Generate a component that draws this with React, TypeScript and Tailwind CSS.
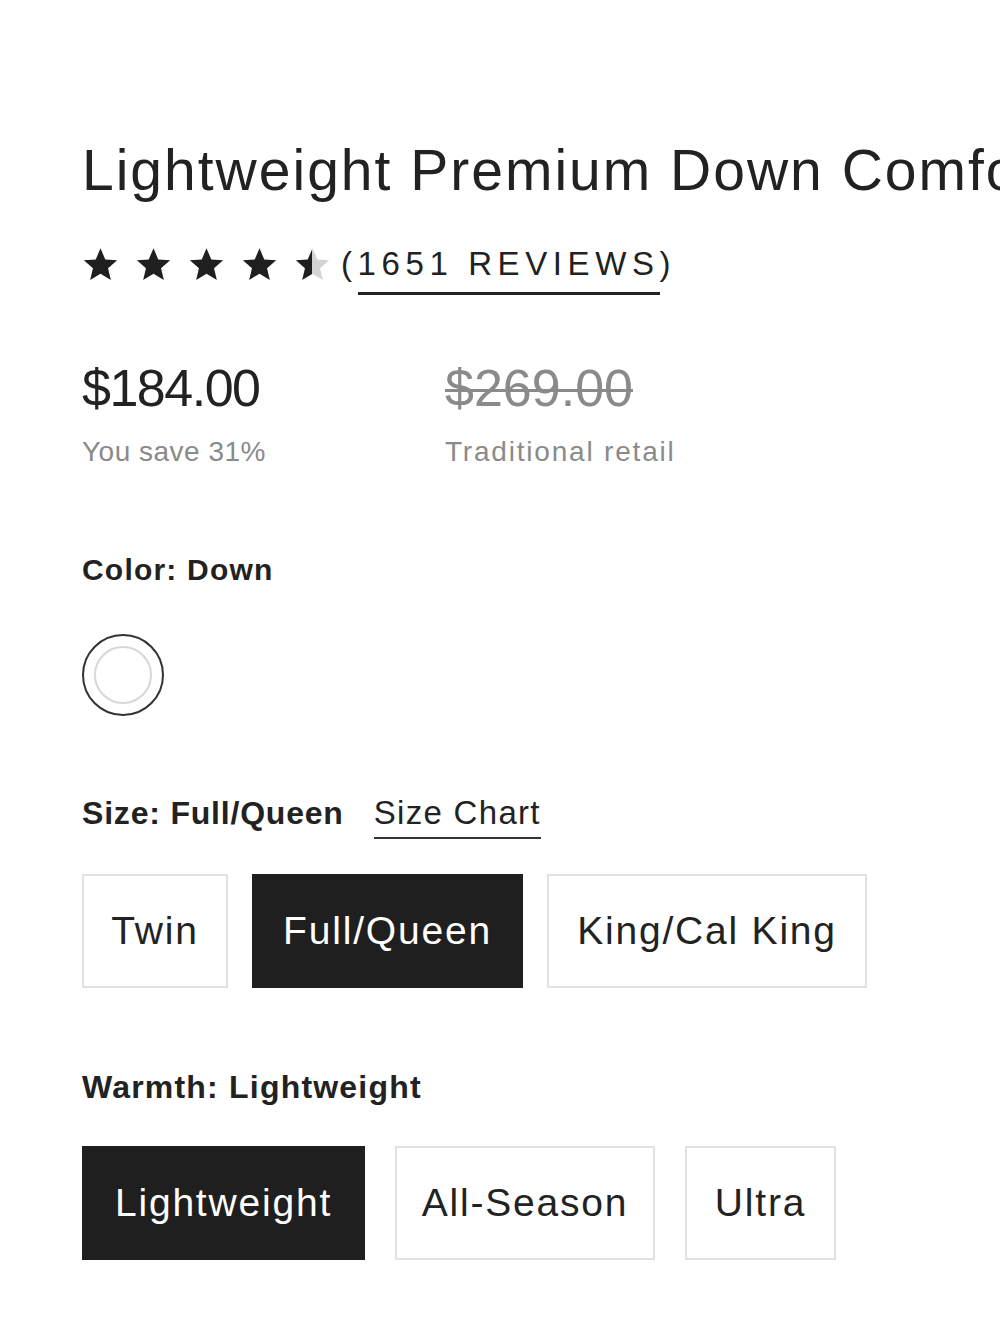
import React from "react";

function Star({ half = false }: { half?: boolean }) {
  return (
    <svg width="37" height="37" viewBox="0 0 24 24">
      <defs>
        <linearGradient id="halfStar">
          <stop offset="50%" stopColor="#1f1f1f" />
          <stop offset="50%" stopColor="#d4d4d4" />
        </linearGradient>
      </defs>
      <path
        d="M12 1.5l3.1 7.2 7.7.6-5.9 5.1 1.8 7.6L12 18l-6.7 4 1.8-7.6-5.9-5.1 7.7-.6z"
        fill={half ? "url(#halfStar)" : "#1f1f1f"}
      />
    </svg>
  );
}

function OptionButton({
  label,
  selected,
  width,
}: {
  label: string;
  selected: boolean;
  width: string;
}) {
  return (
    <button
      className={`h-[114px] ${width} flex items-center justify-center text-[39px] tracking-[1.8px] border-2 ${
        selected
          ? "bg-[#1f1f1f] border-[#1f1f1f] text-white"
          : "bg-white border-[#e2e2e2] text-[#222]"
      }`}
    >
      {label}
    </button>
  );
}

export default function App() {
  return (
    <div
      className="w-[1000px] h-[1333px] overflow-hidden bg-white text-[#222]"
      style={{ fontFamily: '"Liberation Sans", Arial, sans-serif' }}
    >
      <div className="pl-[82px] pt-[132px] flex flex-col">
        <h1 className="whitespace-nowrap text-[57px] leading-[76px] tracking-[2px] text-[#222]">
          Lightweight Premium Down Comforter
        </h1>

        <div className="mt-[34px] flex items-center">
          <div className="flex items-center gap-[16px]">
            <Star />
            <Star />
            <Star />
            <Star />
            <Star half />
          </div>
          <span className="ml-[10px] text-[33px] tracking-[5.6px] leading-[44px]">
            (
            <span className="border-b-[3px] border-[#222] pb-[10px]">
              1651 REVIEWS
            </span>
            )
          </span>
        </div>

        <div className="mt-[70px] flex">
          <div className="w-[363px] flex flex-col">
            <span className="text-[52px] leading-[64px] tracking-[-1.5px]">
              $184.00
            </span>
            <span className="mt-[14px] text-[28px] leading-[36px] text-[#8a8a8a] tracking-[0.5px]">
              You save 31%
            </span>
          </div>
          <div className="flex flex-col">
            <span className="text-[52px] leading-[64px] text-[#8a8a8a] line-through decoration-[3px]">
              $269.00
            </span>
            <span className="mt-[14px] text-[28px] leading-[36px] text-[#8a8a8a] tracking-[1.8px]">
              Traditional retail
            </span>
          </div>
        </div>

        <div className="mt-[80px] text-[30px] leading-[40px] font-bold tracking-[1.2px]">
          Color: Down
        </div>

        <div className="mt-[44px] w-[82px] h-[82px] rounded-full border-2 border-[#333] flex items-center justify-center">
          <div className="w-[58px] h-[58px] rounded-full border-2 border-[#d8d8d8] bg-white" />
        </div>

        <div className="mt-[75px] flex items-baseline gap-[30px]">
          <span className="text-[32px] leading-[44px] font-bold tracking-[0.8px]">
            Size: Full/Queen
          </span>
          <span className="text-[33px] leading-[44px] tracking-[1.3px] border-b-2 border-[#333] pb-[2px]">
            Size Chart
          </span>
        </div>

        <div className="mt-[35px] flex gap-[24px]">
          <OptionButton label="Twin" selected={false} width="w-[146px]" />
          <OptionButton label="Full/Queen" selected width="w-[271px]" />
          <OptionButton label="King/Cal King" selected={false} width="w-[320px]" />
        </div>

        <div className="mt-[77px] text-[32px] leading-[44px] font-bold tracking-[1.2px]">
          Warmth: Lightweight
        </div>

        <div className="mt-[37px] flex gap-[30px]">
          <OptionButton label="Lightweight" selected width="w-[283px]" />
          <OptionButton label="All-Season" selected={false} width="w-[260px]" />
          <OptionButton label="Ultra" selected={false} width="w-[151px]" />
        </div>
      </div>
    </div>
  );
}
